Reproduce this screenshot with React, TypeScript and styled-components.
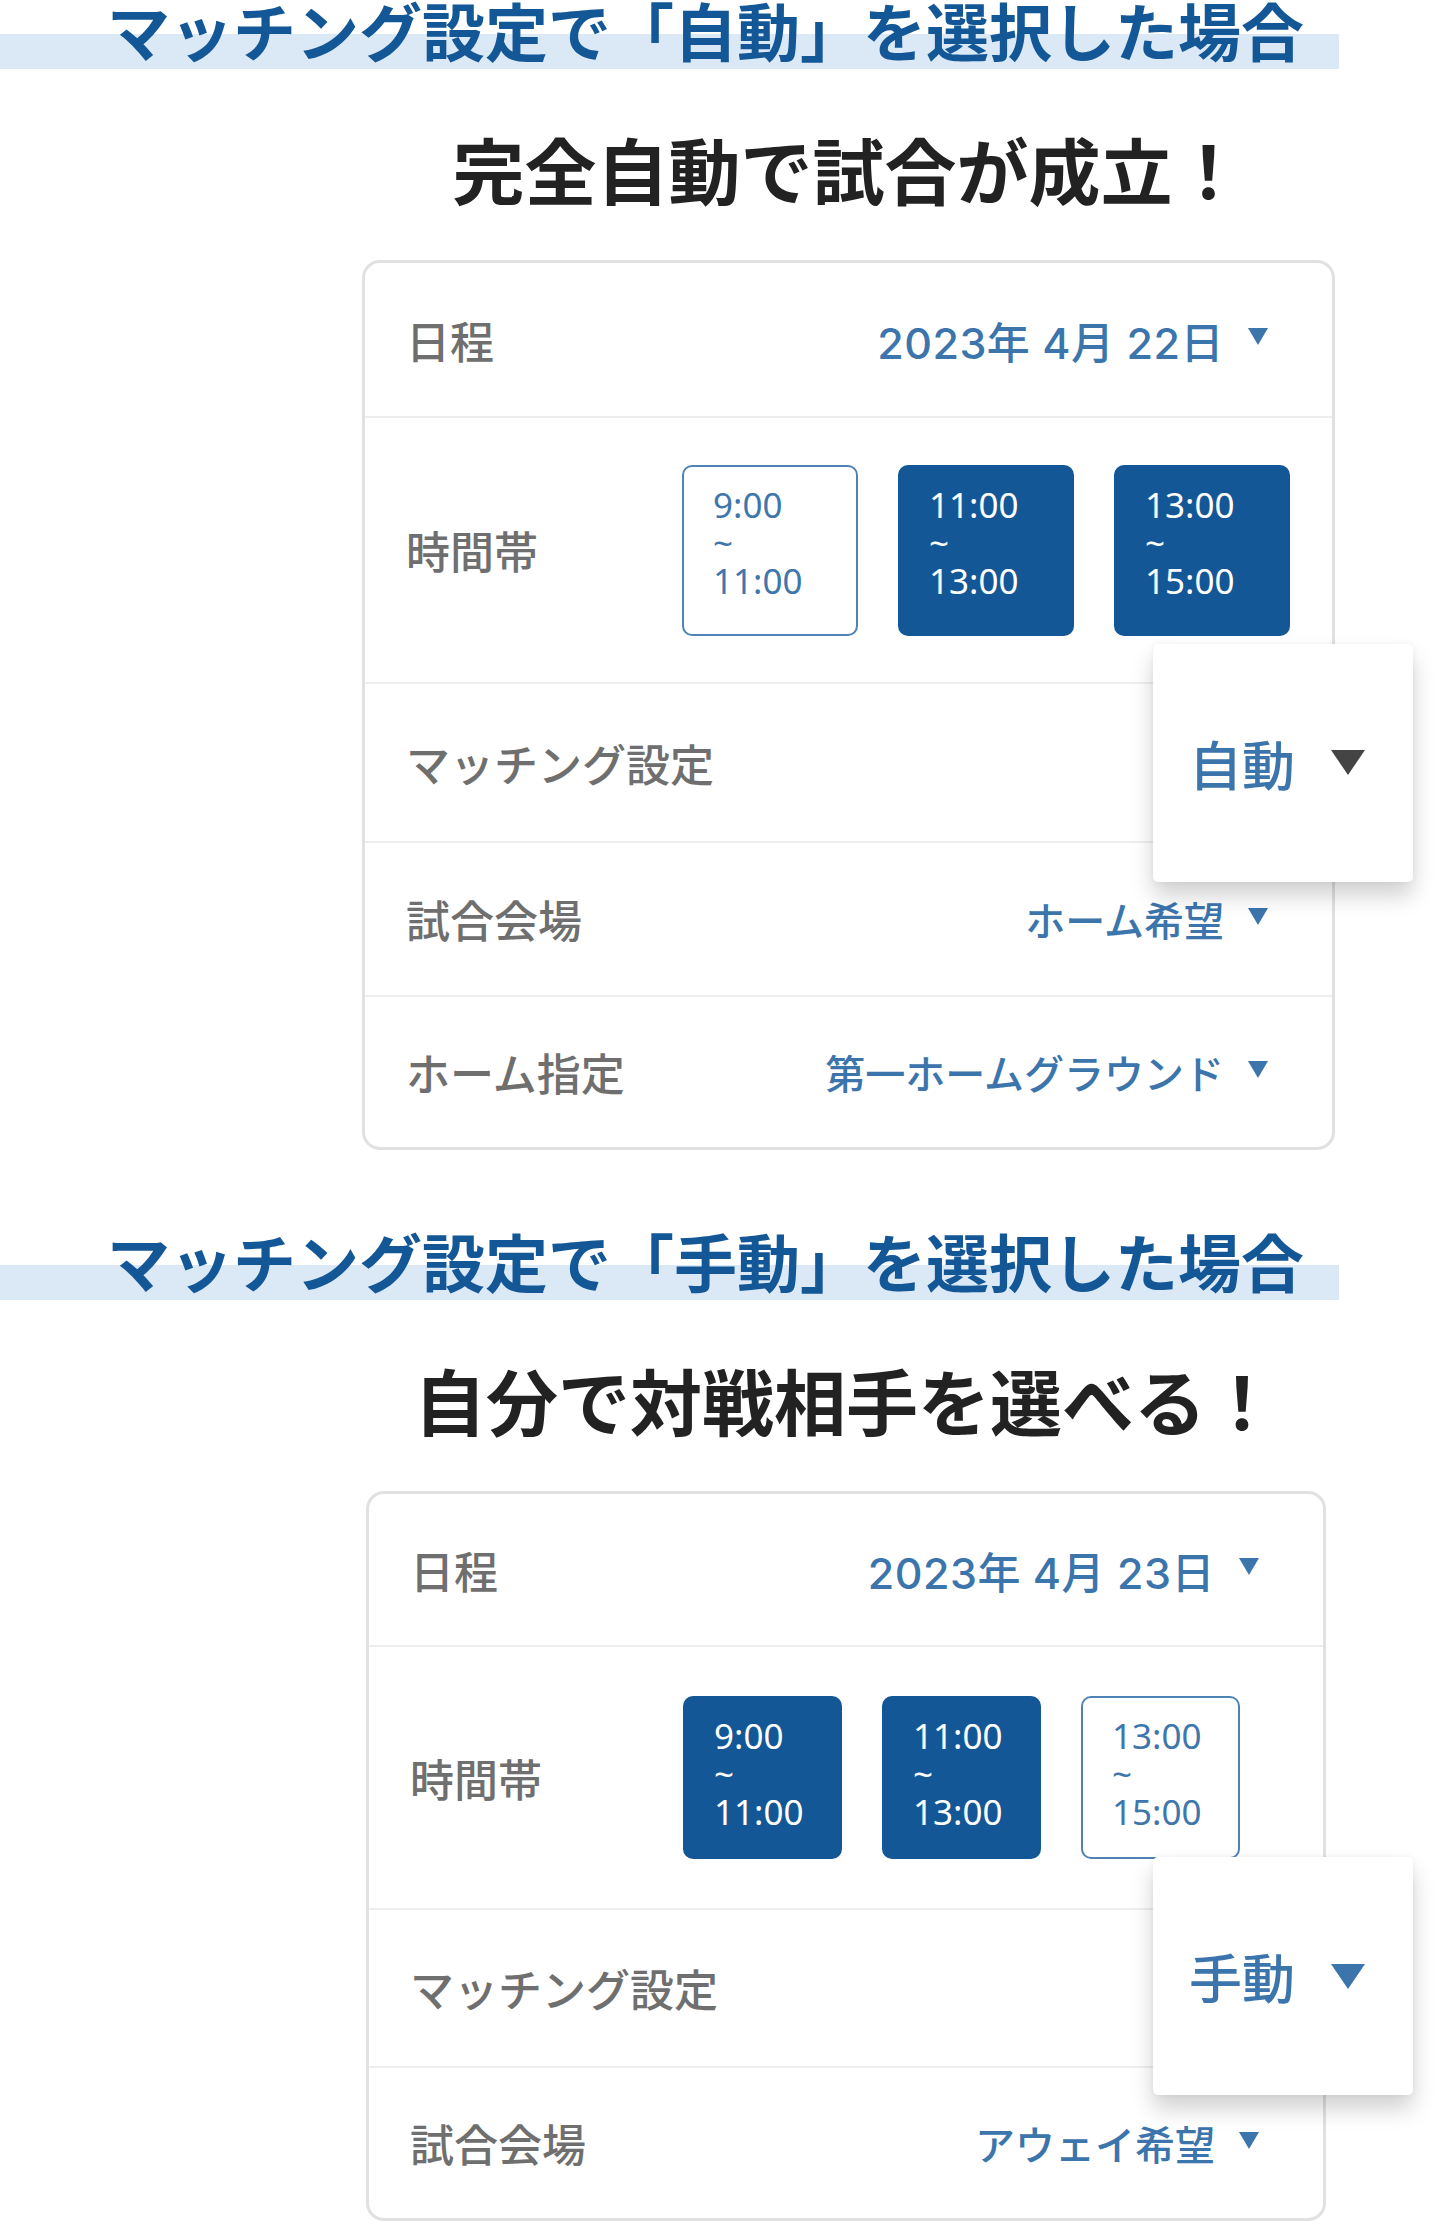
import styled, { createGlobalStyle } from "styled-components";

const GlobalStyle = createGlobalStyle`
  body {
    margin: 0;
    background: #fff;
    font-family: "Noto Sans CJK JP", "Noto Sans", sans-serif;
  }
`;

const BLUE = "#135797";
const VALUE_BLUE = "#3c75ac";

type Slot = { from: string; to: string; on: boolean };

type Example = {
  heading: string;
  lead: string;
  x: number;
  w: number;
  gap: number;
  date: string;
  slots: Slot[];
  slotW: number;
  slotH: number;
  slotAt: number;
  rows: number[];
  mode: string;
  caret: string;
  popOut: number;
  popDy: number;
  extra: { label: string; value: string }[];
};

const EXAMPLES: Example[] = [
  {
    heading: "マッチング設定で「自動」を選択した場合",
    lead: "完全自動で試合が成立！",
    x: 362,
    w: 973,
    gap: 0,
    date: "2023年 4月 22日",
    slots: [
      { from: "9:00", to: "11:00", on: false },
      { from: "11:00", to: "13:00", on: true },
      { from: "13:00", to: "15:00", on: true },
    ],
    slotW: 176,
    slotH: 171,
    slotAt: 276,
    rows: [153, 266, 159, 154, 152],
    mode: "自動",
    caret: "#444",
    popOut: 81,
    popDy: 0,
    extra: [
      { label: "試合会場", value: "ホーム希望" },
      { label: "ホーム指定", value: "第一ホームグラウンド" },
    ],
  },
  {
    heading: "マッチング設定で「手動」を選択した場合",
    lead: "自分で対戦相手を選べる！",
    x: 366,
    w: 960,
    gap: 81,
    date: "2023年 4月 23日",
    slots: [
      { from: "9:00", to: "11:00", on: true },
      { from: "11:00", to: "13:00", on: true },
      { from: "13:00", to: "15:00", on: false },
    ],
    slotW: 159,
    slotH: 163,
    slotAt: 273,
    rows: [151, 263, 158, 152],
    mode: "手動",
    caret: VALUE_BLUE,
    popOut: 90,
    popDy: -12,
    extra: [{ label: "試合会場", value: "アウェイ希望" }],
  },
];

export default function App() {
  return (
    <>
      <GlobalStyle />
      <Page>
        {EXAMPLES.map((ex) => (
          <Section key={ex.heading} $gap={ex.gap}>
            <Heading>{ex.heading}</Heading>
            <Body $x={ex.x} $w={ex.w}>
              <Lead>{ex.lead}</Lead>
              <Card>
                <Row $h={ex.rows[0]}>
                  <Label>日程</Label>
                  <DateValue>
                    {ex.date}
                    <Caret />
                  </DateValue>
                </Row>
                <SlotRow $h={ex.rows[1]} $at={ex.slotAt}>
                  <Label>時間帯</Label>
                  <Slots>
                    {ex.slots.map((s) => (
                      <SlotBox key={s.from} $on={s.on} $w={ex.slotW} $h={ex.slotH}>
                        {s.from}
                        <br />~<br />
                        {s.to}
                      </SlotBox>
                    ))}
                  </Slots>
                </SlotRow>
                <Row $h={ex.rows[2]}>
                  <Label>マッチング設定</Label>
                  <Popup $out={ex.popOut} $dy={ex.popDy}>
                    <PopupText>{ex.mode}</PopupText>
                    <BigCaret $color={ex.caret} />
                  </Popup>
                </Row>
                {ex.extra.map((f, i) => (
                  <Row key={f.label} $h={ex.rows[3 + i]}>
                    <Label>{f.label}</Label>
                    <Value>
                      {f.value}
                      <Caret />
                    </Value>
                  </Row>
                ))}
              </Card>
            </Body>
          </Section>
        ))}
      </Page>
    </>
  );
}

const Page = styled.main`
  display: flex;
  flex-direction: column;
  width: 1440px;
`;

const Section = styled.section<{ $gap: number }>`
  display: flex;
  flex-direction: column;
  margin-top: ${(p) => p.$gap}px;
`;

const Heading = styled.h2`
  box-sizing: border-box;
  width: 1339px;
  height: 69px;
  margin: 0;
  padding-left: 107px;
  font-size: 63px;
  line-height: 58px;
  font-weight: 700;
  color: ${BLUE};
  white-space: nowrap;
  background: linear-gradient(to bottom, transparent 34px, #dbe9f6 34px);
`;

const Body = styled.div<{ $x: number; $w: number }>`
  display: flex;
  flex-direction: column;
  margin-left: ${(p) => p.$x}px;
  width: ${(p) => p.$w}px;
`;

const Lead = styled.p`
  margin: 63px 0 56px;
  text-align: center;
  font-size: 72px;
  line-height: 72px;
  font-weight: 700;
  color: #222;
  white-space: nowrap;
`;

const Card = styled.div`
  display: flex;
  flex-direction: column;
  border: 3px solid #e1e1e1;
  border-radius: 18px;
  background: #fff;
`;

const Row = styled.div<{ $h: number }>`
  position: relative;
  box-sizing: border-box;
  display: flex;
  align-items: center;
  justify-content: space-between;
  height: ${(p) => p.$h}px;
  padding: 0 64px 0 41px;
  & + & {
    border-top: 2px solid #eeeeee;
  }
`;

const SlotRow = styled(Row)<{ $at: number }>`
  justify-content: flex-start;
  border-top: 2px solid #eeeeee;
  & > :first-child {
    width: ${(p) => p.$at}px;
    flex: none;
  }
`;

const Label = styled.span`
  font-size: 44px;
  font-weight: 500;
  color: #6f6f6f;
  white-space: nowrap;
`;

const Value = styled.span`
  display: flex;
  align-items: center;
  gap: 24px;
  font-family: "Inter", "Noto Sans CJK JP", sans-serif;
  font-size: 40px;
  font-weight: 500;
  color: ${VALUE_BLUE};
  white-space: pre;
`;

const DateValue = styled(Value)`
  font-size: 43px;
  letter-spacing: 0.5px;
`;

const Caret = styled.i`
  width: 0;
  height: 0;
  border-left: 10px solid transparent;
  border-right: 10px solid transparent;
  border-top: 17px solid ${VALUE_BLUE};
  margin-bottom: 6px;
`;

const Slots = styled.div`
  display: flex;
  gap: 40px;
`;

const SlotBox = styled.div<{ $on: boolean; $w: number; $h: number }>`
  box-sizing: border-box;
  width: ${(p) => p.$w}px;
  height: ${(p) => p.$h}px;
  padding: 19px 0 0 29px;
  border: 2px solid ${(p) => (p.$on ? "#145796" : "#4f83b6")};
  border-radius: 10px;
  background: ${(p) => (p.$on ? "#145796" : "#fff")};
  color: ${(p) => (p.$on ? "#fff" : "#3f76ab")};
  font-family: "Noto Sans", sans-serif;
  font-size: 35px;
  line-height: 38px;
`;

const Popup = styled.div<{ $out: number; $dy: number }>`
  position: absolute;
  z-index: 2;
  right: -${(p) => p.$out}px;
  top: 50%;
  box-sizing: border-box;
  width: 260px;
  height: 238px;
  padding-right: 12px;
  transform: translateY(calc(-50% + ${(p) => p.$dy}px));
  display: flex;
  align-items: center;
  justify-content: center;
  gap: 36px;
  background: #fff;
  border-radius: 5px;
  box-shadow: 0 14px 22px rgba(0, 0, 0, 0.18), 0 0 6px rgba(0, 0, 0, 0.05);
`;

const PopupText = styled.span`
  font-size: 53px;
  font-weight: 500;
  color: ${VALUE_BLUE};
`;

const BigCaret = styled.i<{ $color: string }>`
  width: 0;
  height: 0;
  border-left: 17px solid transparent;
  border-right: 17px solid transparent;
  border-top: 25px solid ${(p) => p.$color};
`;
